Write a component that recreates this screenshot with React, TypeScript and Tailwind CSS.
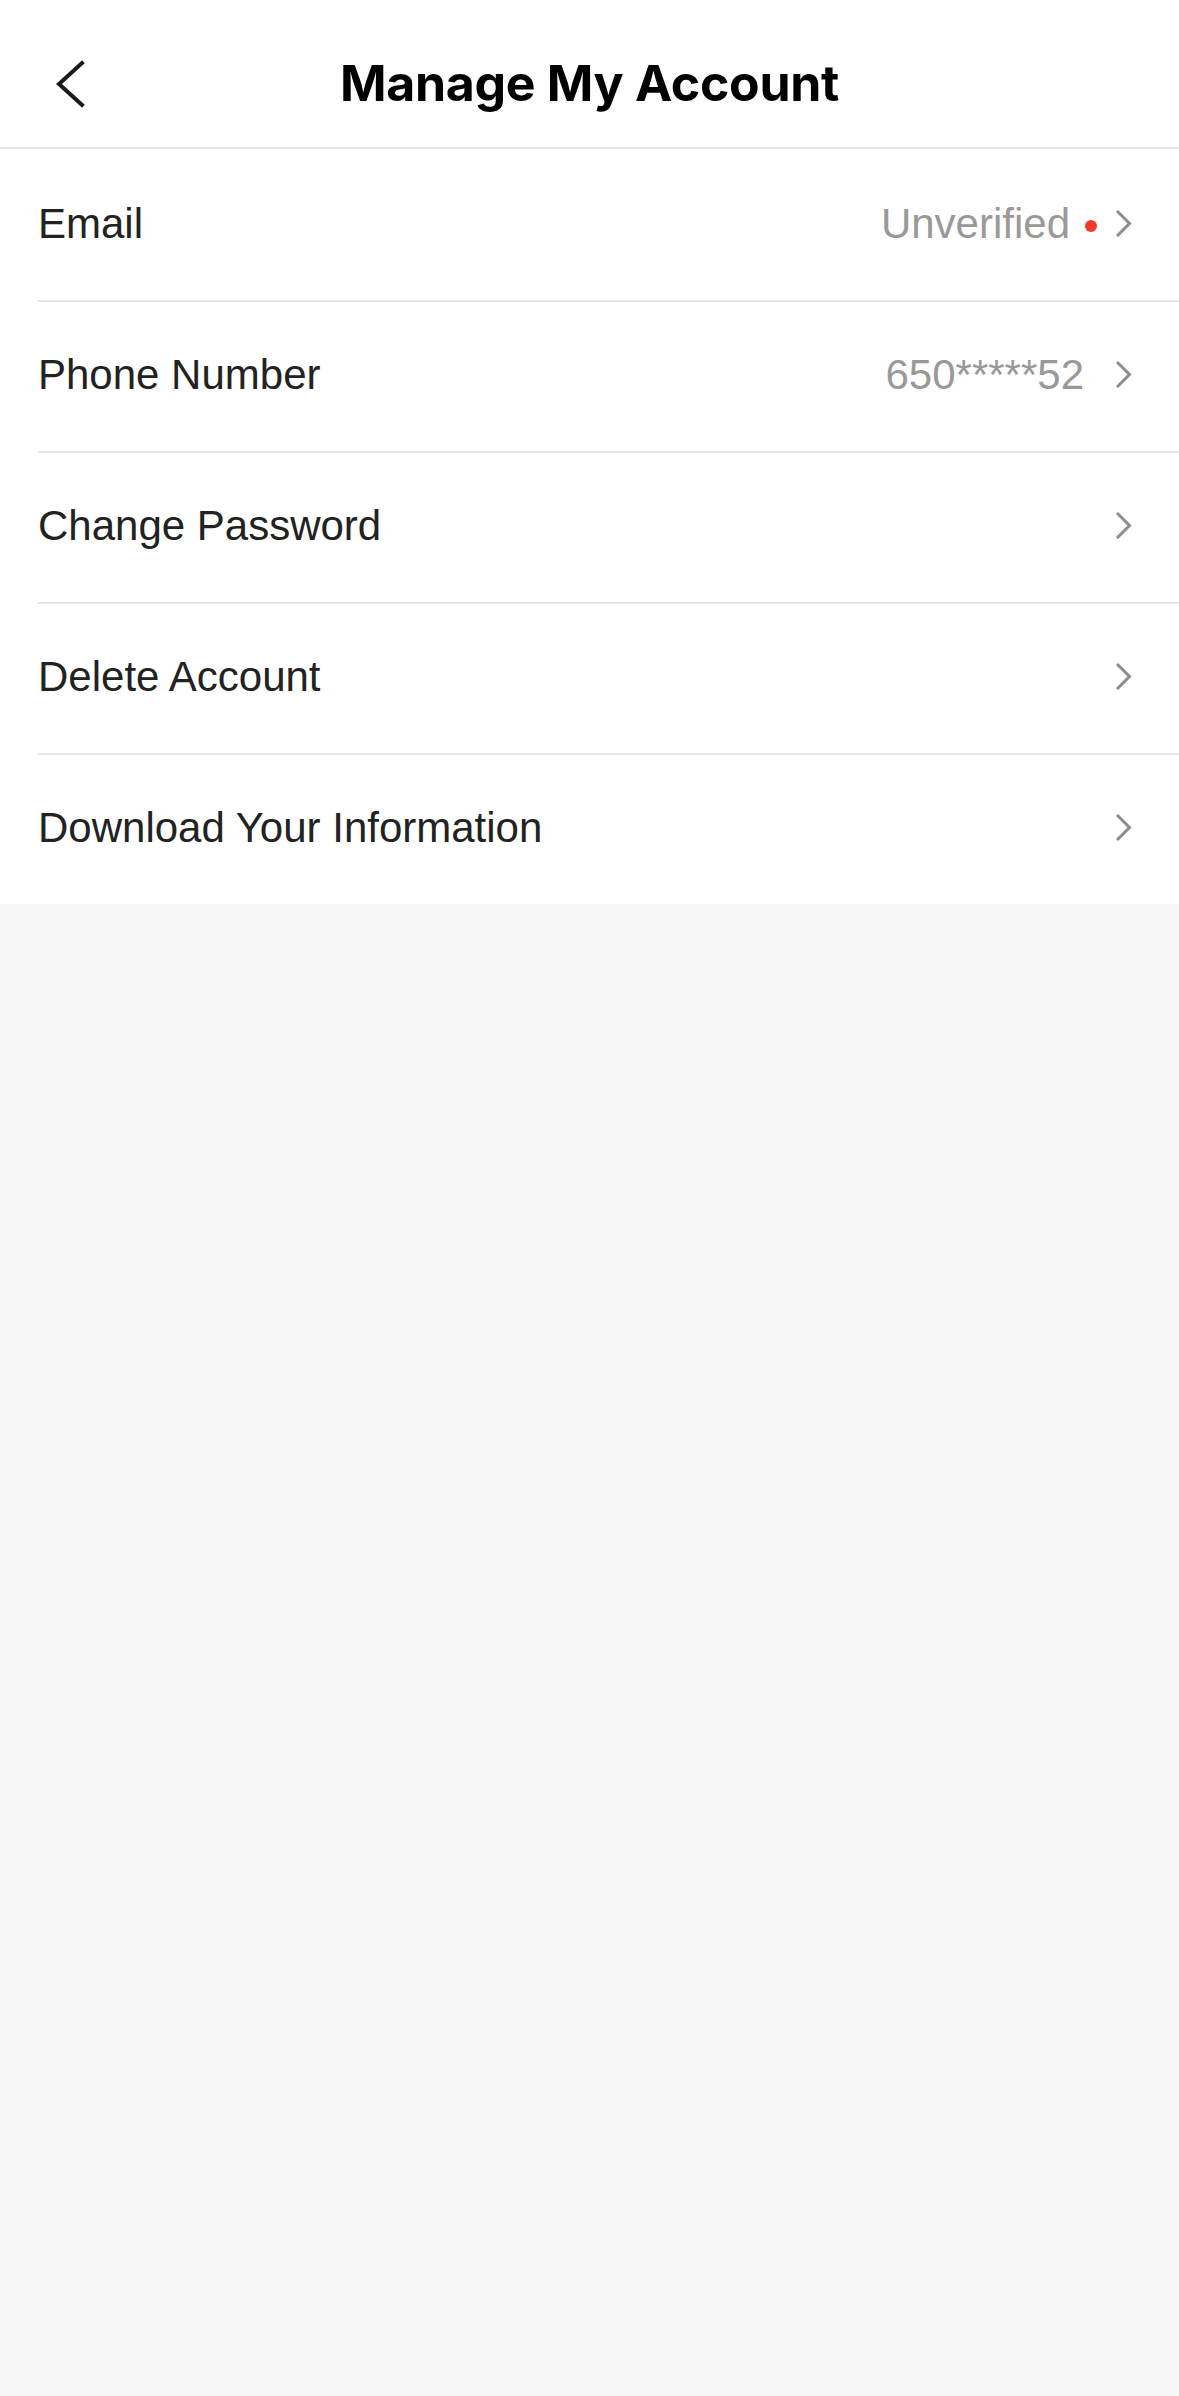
const rows = [
  { label: 'Email', value: 'Unverified', dot: true },
  { label: 'Phone Number', value: '650*****52', dot: false },
  { label: 'Change Password' },
  { label: 'Delete Account' },
  { label: 'Download Your Information' },
]

function BackIcon() {
  return (
    <svg width="32" height="50" viewBox="0 0 32 50" className="shrink-0">
      <path d="M27 4 L4 25 L27 46" fill="none" stroke="#1a1a1a" strokeWidth="4" strokeLinecap="square" strokeLinejoin="miter" />
    </svg>
  )
}

function Chevron() {
  return (
    <svg width="16" height="27" viewBox="0 0 16 27" className="shrink-0">
      <path d="M2 2 L13.5 13.5 L2 25" fill="none" stroke="#8c8c8c" strokeWidth="3" strokeLinecap="square" />
    </svg>
  )
}

export default function App() {
  return (
    <div className="min-h-[2396px] bg-[#f5f5f5] font-['Liberation_Sans',Arial,sans-serif]">
      {/* header */}
      <div className="flex h-[149px] items-center border-b-2 border-[#e6e6e6] bg-white pt-[20px]">
        <div className="flex w-[150px] items-center pl-[55px]">
          <BackIcon />
        </div>
        <h1 className="flex-1 text-center font-['Inter',sans-serif] text-[50px] font-bold tracking-[-0.3px] text-black">
          Manage My Account
        </h1>
        <div className="w-[150px]" />
      </div>

      {/* rows */}
      <div className="bg-white pt-[2px]">
        {rows.map((row, i) => (
          <div key={row.label} className="pl-[38px]">
            <div
              className={
                i < rows.length - 1
                  ? 'flex h-[151px] items-center border-b-2 border-[#e6e6e6] pb-[4px] pr-[47px]'
                  : 'flex h-[149px] items-center pb-[4px] pr-[47px]'
              }
            >
              <span className="flex-1 text-[42px] text-[#222]">{row.label}</span>
              {row.value && (
                <span className="text-[42px] text-[#999]">{row.value}</span>
              )}
              {row.dot ? (
                <span className="ml-[15px] mr-[19px] mt-[4px] h-[12px] w-[12px] rounded-full bg-[#f2392c]" />
              ) : row.value ? (
                <span className="w-[32px]" />
              ) : null}
              <Chevron />
            </div>
          </div>
        ))}
      </div>
    </div>
  )
}
